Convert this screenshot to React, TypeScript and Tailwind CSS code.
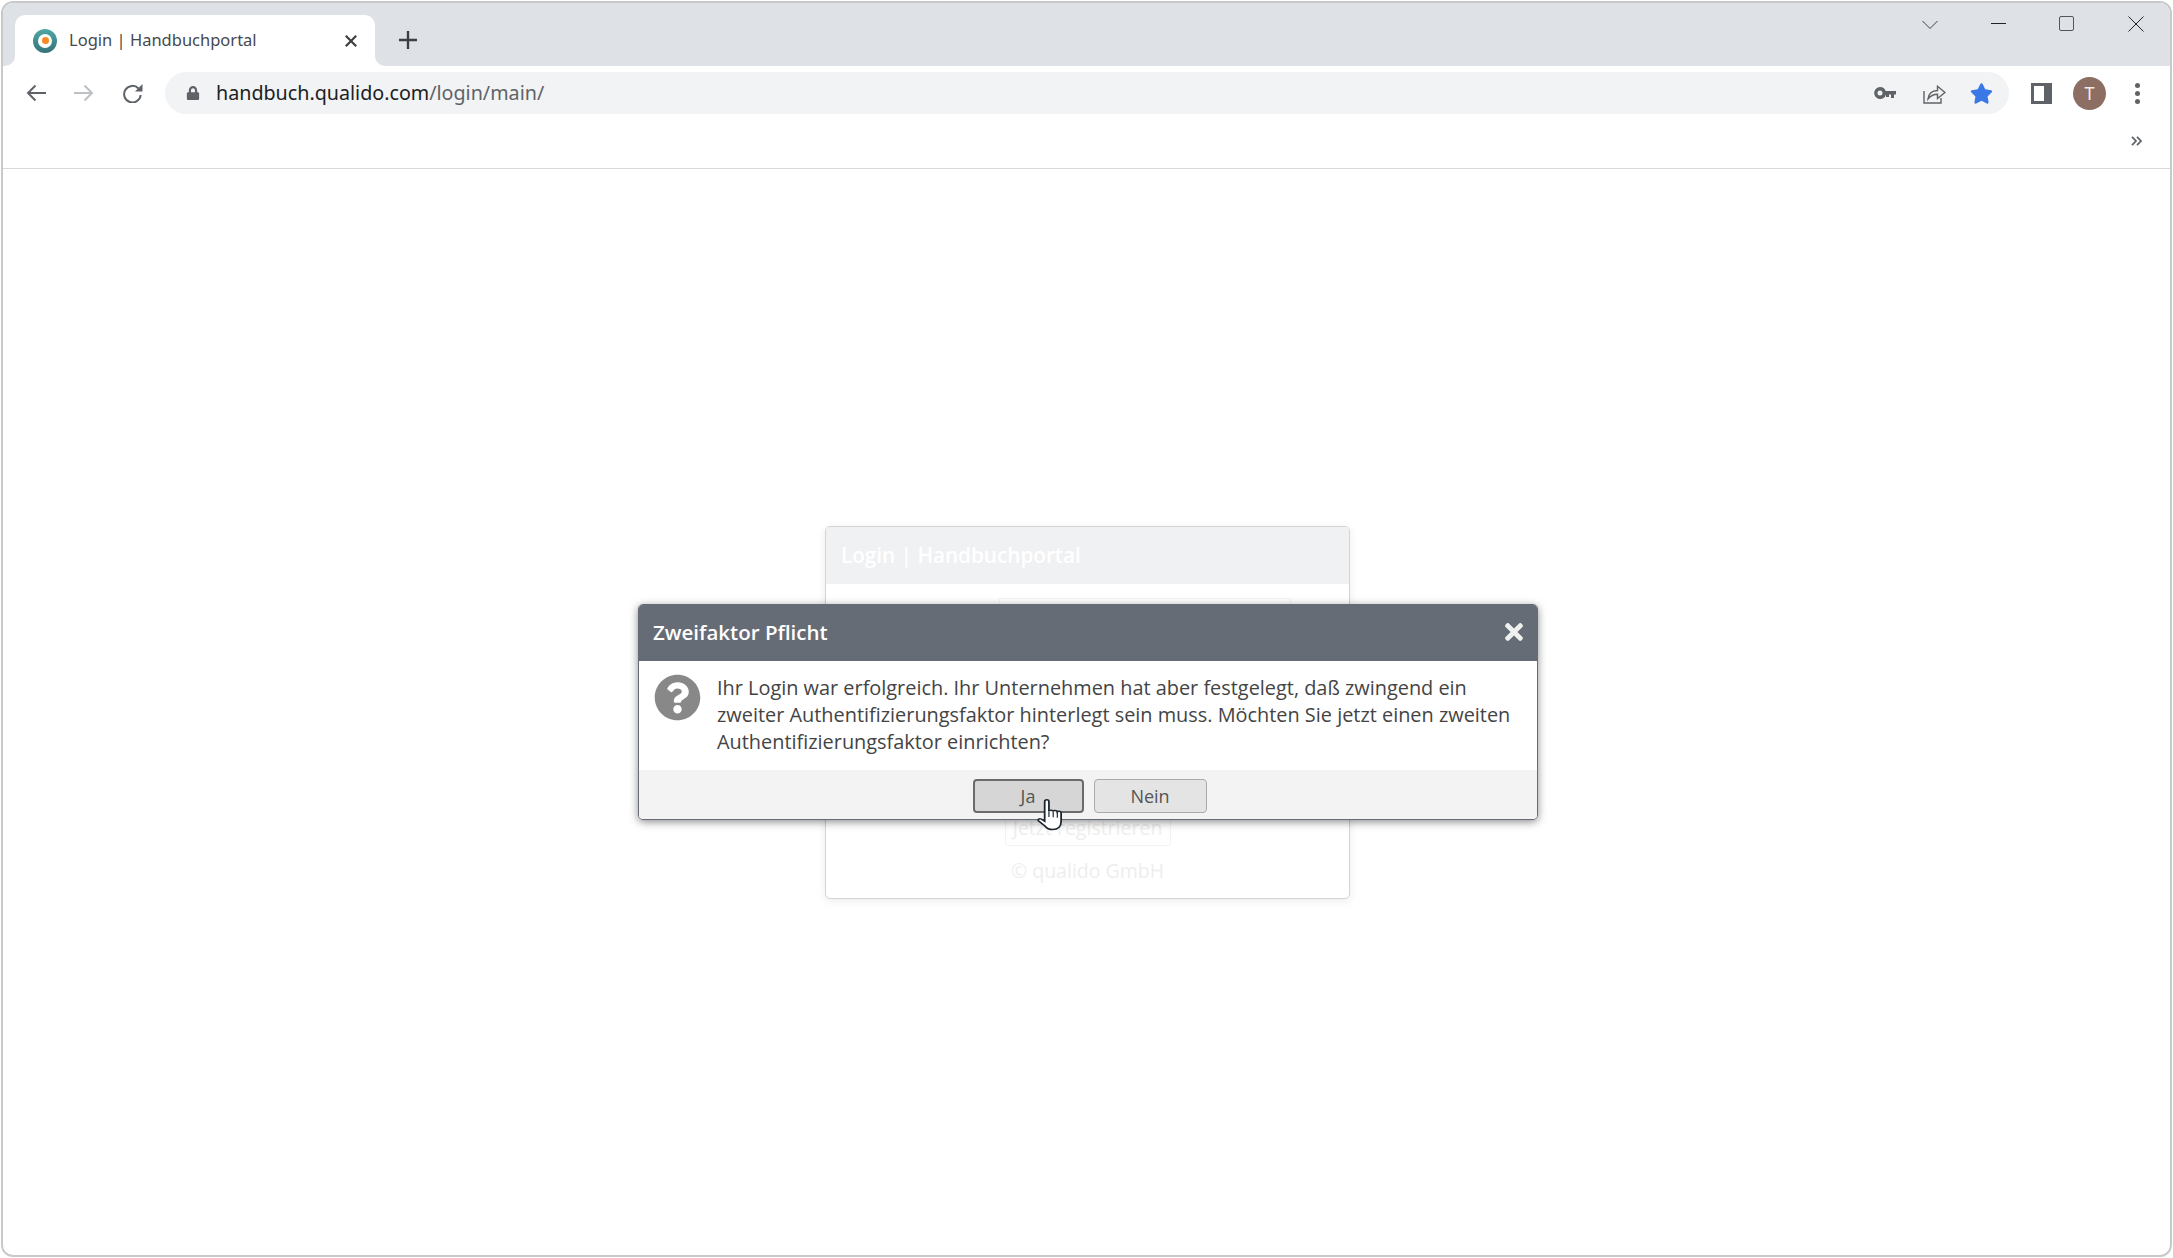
import React from "react";
import { FaQuestionCircle, FaTimes, FaStar, FaLock } from "react-icons/fa";

const ChromeFont = "font-['Noto_Sans','Open_Sans',sans-serif]";

const BackArrow = () => (
  <svg width="20" height="18" viewBox="0 0 20 18" fill="none" stroke="#5f6368" strokeWidth="2">
    <path d="M20 9H2M9.500 1.500L2 9l7.500 7.500" />
  </svg>
);

const ForwardArrow = () => (
  <svg width="20" height="18" viewBox="0 0 20 18" fill="none" stroke="#bdc0c4" strokeWidth="2">
    <path d="M0 9h18M10.500 1.500L18 9l-7.500 7.500" />
  </svg>
);

const Reload = () => (
  <svg width="21" height="19" viewBox="0 0 21 19" fill="none">
    <path d="M16.500 4.500A8.300 8.300 0 1 0 18.700 11" stroke="#5f6368" strokeWidth="2" />
    <path d="M20.500 0v7.500H13z" fill="#5f6368" />
  </svg>
);

const KeyIcon = () => (
  <svg width="22" height="12" viewBox="0 0 22 12" fill="#5f6368">
    <path fillRule="evenodd" d="M6 0a6 6 0 0 1 5.700 4H22v3.500h-2V11h-3V7.500h-2V10h-3V7.500A6 6 0 1 1 6 0zm0 3.500a2.500 2.500 0 1 0 0 5 2.500 2.500 0 0 0 0-5z" />
  </svg>
);

const ShareIcon = () => (
  <svg width="23" height="21" viewBox="0 0 23 21" fill="none" stroke="#5f6368" strokeWidth="1.400">
    <path d="M1 8v12h17v-5" />
    <path d="M5 16c.6-5 4-8.300 9.500-8.500V3.200l7.500 6.300-7.500 6v-4.300C10.500 11.200 7.500 12.800 5 16z" />
  </svg>
);

const SidePanelIcon = () => (
  <svg width="21" height="21" viewBox="0 0 21 21">
    <path fill="#5f6368" d="M0 0h21v21H0z" />
    <path fill="#fff" d="M3 3h10v15H3z" />
  </svg>
);

const TabFavicon = () => (
  <div className="flex h-[24px] w-[24px] shrink-0 items-center justify-center rounded-full bg-gradient-to-b from-[#4fa8a3] to-[#35737a]">
    <div className="flex h-[14px] w-[14px] items-center justify-center rounded-full bg-white">
      <div className="h-[7px] w-[7px] rounded-full bg-[#f58a23]" />
    </div>
  </div>
);

const HandCursor = () => (
  <svg width="26" height="33" viewBox="0 0 22 34" preserveAspectRatio="none" className="absolute left-[62px] top-[18px]">
    <path
      d="M6.500 3c0-1.300.8-2.200 1.800-2.200s1.800.9 1.800 2.200v9.500c.2-1.300 3.300-1.300 3.600.3.300-1.200 3.200-1.200 3.500.4.500-.9 3-.8 3.200 1v9c0 4.600-2.300 8.300-7.200 8.300-3.600 0-5-1.400-6.500-3.700L1.200 22.500c-.8-1.200.8-2.900 2.300-1.900l3 2.400V3z"
      fill="#fff"
      stroke="#1c2430"
      strokeWidth="1.500"
    />
    <path d="M10.100 12.500v6M13.700 12.800v6M17.200 13.200v6" stroke="#1c2430" strokeWidth="1" fill="none" />
  </svg>
);

const TabStrip = () => (
  <div className="flex h-[63px] shrink-0 items-end bg-[#dee1e6] pl-[12px]">
    <div className="relative flex h-[51px] w-[360px] items-center rounded-t-[10px] bg-white pl-[18px]">
      <div className="absolute bottom-0 left-[-10px] h-[10px] w-[10px] bg-white">
        <div className="h-full w-full rounded-br-[10px] bg-[#dee1e6]" />
      </div>
      <div className="absolute bottom-0 right-[-10px] h-[10px] w-[10px] bg-white">
        <div className="h-full w-full rounded-bl-[10px] bg-[#dee1e6]" />
      </div>
      <TabFavicon />
      <span className={`ml-[12px] text-[16.500px] text-[#45494e] ${ChromeFont}`}>Login | Handbuchportal</span>
      <svg width="12" height="12" viewBox="0 0 12 12" className="ml-auto mr-[18px]" fill="none" stroke="#3c4043" strokeWidth="2.200">
        <path d="M.8.800l10.400 10.400M11.200.800L.8 11.200" />
      </svg>
    </div>
    <svg width="18" height="18" viewBox="0 0 18 18" className="mb-[17px] ml-[24px]" fill="none" stroke="#3c4043" strokeWidth="2.400">
      <path d="M9 0v18M0 9h18" />
    </svg>
    <div className="ml-auto flex h-full items-start pt-[13px]">
      <svg width="16" height="10" viewBox="0 0 16 10" className="mt-[4px]" fill="none" stroke="#3c4043" strokeWidth="1">
        <path d="M.5 1L8 8.500 15.500 1" />
      </svg>
      <div className="ml-[53px] mt-[7px] h-px w-[15px] bg-[#222]" />
      <div className="ml-[53px] h-[15px] w-[15px] rounded-[2px] border border-[#555]" />
      <svg width="16" height="16" viewBox="0 0 16 16" className="ml-[54px] mr-[26px]" fill="none" stroke="#222" strokeWidth="1">
        <path d="M.5.500l15 15M15.500.500l-15 15" />
      </svg>
    </div>
  </div>
);

const Toolbar = () => (
  <div className="flex h-[54px] shrink-0 items-center bg-white pb-[6px] pl-[23px]">
    <div className="flex items-center gap-[28px] pt-[6px]">
      <BackArrow />
      <ForwardArrow />
      <Reload />
    </div>
    <div className="ml-[22px] mt-[6px] flex h-[42px] w-[1844px] items-center rounded-full bg-[#f1f3f4] pl-[21px]">
      <FaLock className="text-[#5f6368]" size={14} />
      <span className={`ml-[16px] text-[19.700px] text-[#202124] ${ChromeFont}`}>
        handbuch.qualido.com<span className="text-[#5f6368]">/login/main/</span>
      </span>
      <div className="ml-auto flex items-center pr-[16px]">
        <KeyIcon />
        <div className="ml-[27px]">
          <ShareIcon />
        </div>
        <FaStar className="ml-[24px] text-[#3b78e7]" size={23} />
      </div>
    </div>
    <div className="ml-[22px] mt-[6px] flex items-center">
      <SidePanelIcon />
      <div className={`ml-[21px] flex h-[33px] w-[33px] items-center justify-center rounded-full bg-[#8d6e63] text-[18px] text-[#f2ece9] ${ChromeFont}`}>
        T
      </div>
      <div className="ml-[29px] flex flex-col gap-[3px]">
        <div className="h-[5px] w-[5px] rounded-full bg-[#5f6368]" />
        <div className="h-[5px] w-[5px] rounded-full bg-[#5f6368]" />
        <div className="h-[5px] w-[5px] rounded-full bg-[#5f6368]" />
      </div>
    </div>
  </div>
);

const BookmarkBar = () => (
  <div className="flex h-[49px] shrink-0 items-center justify-end border-b border-[#d9d9d9] bg-white pb-[6px] pr-[28px]">
    <svg width="11" height="10" viewBox="0 0 11 10" fill="none" stroke="#5f6368" strokeWidth="1.800">
      <path d="M1 .800L5 5 1 9.200M6 .800L10 5 6 9.200" />
    </svg>
  </div>
);

const LoginCard = () => (
  <div className="flex h-[373px] w-[525px] flex-col overflow-hidden rounded-[5px] border border-[#d4d4d4] bg-white shadow-[0_2px_10px_rgba(0,0,0,0.08)]">
    <div className="flex h-[57px] shrink-0 items-center bg-[#f0f1f3] px-[15px] pt-[2px] text-[20.700px] font-semibold text-white">
      Login | Handbuchportal
    </div>
    <div className="flex flex-1 flex-col items-center pt-[14px]">
      <div className="mr-[58px] h-[150px] w-[292px] self-end border border-[#f5f5f5]" />
      <div className="mt-[62px] flex h-[36px] w-[166px] items-center justify-center rounded-[3px] border border-[#f3f3f3] text-[19.500px] text-[#eeeeee]">
        Jetzt registrieren
      </div>
      <div className="mt-[10px] text-[19.500px] text-[#eeeeee]">© qualido GmbH</div>
    </div>
  </div>
);

const ConfirmDialog = () => (
  <div className="relative w-[900px] rounded-[5px] border border-[#666c75] bg-white shadow-[0_2px_8px_rgba(0,0,0,0.45)]">
    <div className="flex h-[56px] items-center justify-between rounded-t-[4px] bg-[#666c75] pb-[2px] pl-[14px] pr-[10px] text-[20.500px] font-semibold text-white">
      <span>Zweifaktor Pflicht</span>
      <FaTimes size={26} className="text-[#f0f0f0]" />
    </div>
    <div className="flex h-[109px] pl-[15px] pt-[13px]">
      <FaQuestionCircle size={47} className="shrink-0 text-[#888888]" />
      <p className="ml-[16px] w-[805px] text-[19.900px] leading-[27px] text-[#444444]">
        Ihr Login war erfolgreich. Ihr Unternehmen hat aber festgelegt, daß zwingend ein zweiter Authentifizierungsfaktor
        hinterlegt sein muss. Möchten Sie jetzt einen zweiten Authentifizierungsfaktor einrichten?
      </p>
    </div>
    <div className="flex h-[49px] items-start justify-center gap-[10px] rounded-b-[4px] bg-[#f3f3f3] pl-[3px] pt-[9px]">
      <button className="relative h-[34px] w-[111px] rounded-[4px] border-2 border-[#6b6b6b] bg-[#d6d6d6] text-[18px] text-[#555555]">
        Ja
        <HandCursor />
      </button>
      <button className="h-[34px] w-[113px] rounded-[4px] border border-[#aaaaaa] bg-[#e4e4e4] text-[18px] text-[#555555]">
        Nein
      </button>
    </div>
  </div>
);

export default function App() {
  return (
    <div className="h-[1258px] w-[2173px] bg-white p-px font-['Open_Sans',sans-serif]">
      <div className="flex h-full w-full flex-col overflow-hidden rounded-[12px] border-2 border-[#c9c9c9] bg-white">
        <TabStrip />
        <Toolbar />
        <BookmarkBar />
        <main className="relative flex flex-1 items-center justify-center pl-[2px]">
          <LoginCard />
          <div className="absolute inset-0 flex items-center justify-center pl-[3px]">
            <ConfirmDialog />
          </div>
        </main>
      </div>
    </div>
  );
}
